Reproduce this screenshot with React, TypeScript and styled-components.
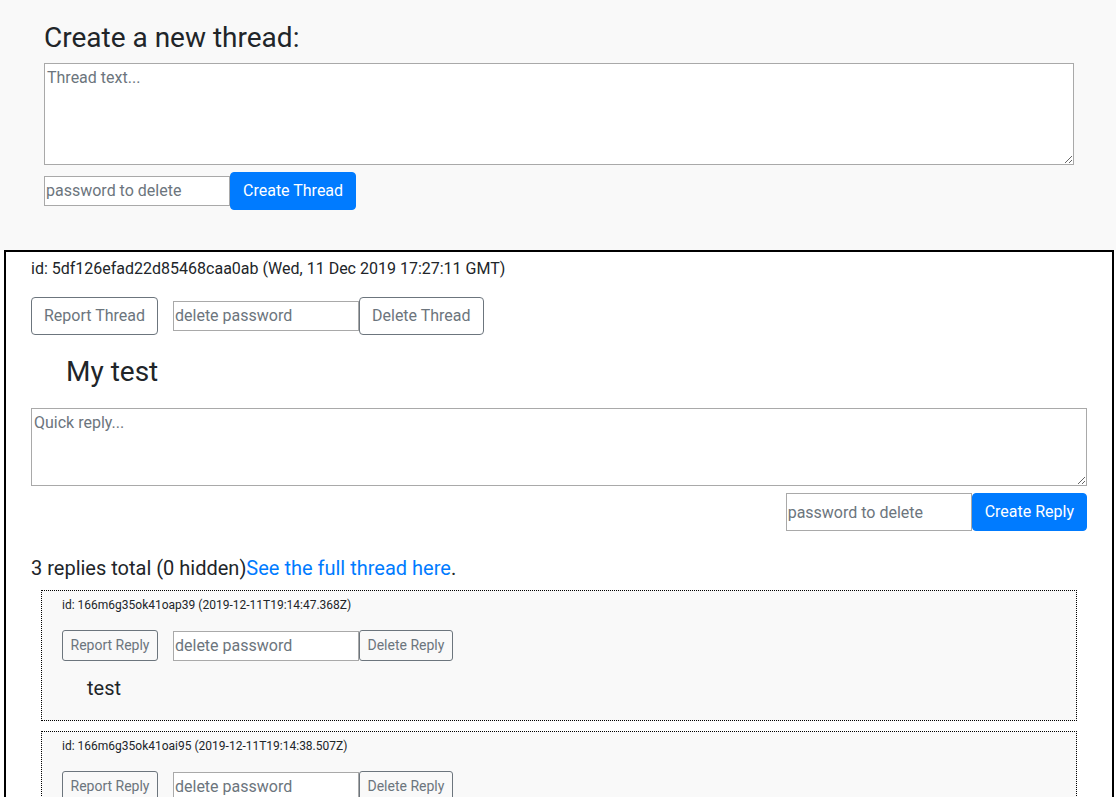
import React from "react";
import styled, { createGlobalStyle } from "styled-components";

const Global = createGlobalStyle`
  html, body { margin: 0; padding: 0; background: #ffffff; }
  body { font-family: Roboto, "Liberation Sans", Arial, sans-serif; color: #212529; font-size: 16px; line-height: 1.5; }
  * { box-sizing: border-box; }
`;

const Header = styled.section`
  background: #f9f9f9;
  padding: 21px 42px 40px 44px;
`;

const Title = styled.h3`
  margin: 0 0 8px;
  font-size: 28px;
  font-weight: 400;
  line-height: 1.2;
`;

const TextArea = styled.textarea<{ $h: number }>`
  display: block;
  width: 100%;
  height: ${(p) => p.$h}px;
  margin: 0;
  padding: 2px 2px;
  border: 1px solid #a9a9a9;
  font-family: Roboto, "Liberation Sans", Arial, sans-serif;
  font-size: 16px;
  line-height: 1.5;
  color: #212529;
  background: #fff;
  resize: vertical;
  &::placeholder { color: #6c757d; opacity: 1; }
`;

const FormRow = styled.div<{ $end?: boolean }>`
  display: flex;
  align-items: center;
  justify-content: ${(p) => (p.$end ? "flex-end" : "flex-start")};
  margin-top: 7px;
`;

const Input = styled.input<{ $h?: number }>`
  width: 186px;
  height: ${(p) => p.$h ?? 30}px;
  margin: 0;
  padding: 1px 1px;
  border: 1px solid #a9a9a9;
  background: #fff;
  font-family: Roboto, "Liberation Sans", Arial, sans-serif;
  font-size: 16px;
  color: #212529;
  &::placeholder { color: #6c757d; opacity: 1; }
`;

const Button = styled.button<{ $variant: "primary" | "outline"; $small?: boolean }>`
  font-family: Roboto, "Liberation Sans", Arial, sans-serif;
  font-size: ${(p) => (p.$small ? 14 : 16)}px;
  line-height: 1.5;
  padding: ${(p) => (p.$small ? "4px 7.5px" : "6px 12px")};
  border-radius: ${(p) => (p.$small ? 3 : 4)}px;
  border: 1px solid ${(p) => (p.$variant === "primary" ? "#007bff" : "#6c757d")};
  background: ${(p) => (p.$variant === "primary" ? "#007bff" : "transparent")};
  color: ${(p) => (p.$variant === "primary" ? "#fff" : "#6c757d")};
  white-space: nowrap;
  cursor: pointer;
`;

const ThreadBox = styled.article`
  margin: 0 2px 0 4px;
  border: 2px solid #000;
  border-bottom: none;
  background: #fff;
  padding: 5px 25px 40px 25px;
`;

const Meta = styled.div<{ $small?: boolean }>`
  font-size: ${(p) => (p.$small ? 12 : 16)}px;
  line-height: 1.5;
  color: #212529;
`;

const Actions = styled.div<{ $top: number }>`
  display: flex;
  align-items: center;
  margin-top: ${(p) => p.$top}px;
`;

const Spacer = styled.span`
  width: 15px;
  flex: none;
`;

const ThreadTitle = styled.h3`
  margin: 20px 0 20px 35px;
  font-size: 28px;
  font-weight: 400;
  line-height: 1.2;
`;

const Summary = styled.p`
  margin: 22px 0 7px;
  font-size: 20px;
  line-height: 1.5;
  a { color: #007bff; text-decoration: none; }
`;

const ReplyBox = styled.div`
  margin: 0 10px 10px;
  border: 1px dotted #000;
  background: #f9f9f9;
  padding: 5px 20px 17px 20px;
`;

const ReplyText = styled.p`
  margin: 12px 0 0 25px;
  font-size: 20px;
  line-height: 1.5;
`;

type Reply = { id: string; date: string; text: string };

const replies: Reply[] = [
  { id: "166m6g35ok41oap39", date: "2019-12-11T19:14:47.368Z", text: "test" },
  { id: "166m6g35ok41oai95", date: "2019-12-11T19:14:38.507Z", text: "test" },
  { id: "166m6g35ok41oah21", date: "2019-12-11T19:14:30.112Z", text: "test" },
];

function ReplyCard({ r }: { r: Reply }) {
  return (
    <ReplyBox>
      <Meta $small>
        id: {r.id} ({r.date})
      </Meta>
      <Actions $top={16}>
        <Button $variant="outline" $small>Report Reply</Button>
        <Spacer />
        <Input placeholder="delete password" />
        <Button $variant="outline" $small>Delete Reply</Button>
      </Actions>
      <ReplyText>{r.text}</ReplyText>
    </ReplyBox>
  );
}

export default function App() {
  return (
    <>
      <Global />
      <Header>
        <Title>Create a new thread:</Title>
        <TextArea $h={102} placeholder="Thread text..." />
        <FormRow>
          <Input placeholder="password to delete" />
          <Button $variant="primary">Create Thread</Button>
        </FormRow>
      </Header>
      <ThreadBox>
        <Meta>id: 5df126efad22d85468caa0ab (Wed, 11 Dec 2019 17:27:11 GMT)</Meta>
        <Actions $top={16}>
          <Button $variant="outline">Report Thread</Button>
          <Spacer />
          <Input placeholder="delete password" />
          <Button $variant="outline">Delete Thread</Button>
        </Actions>
        <ThreadTitle>My test</ThreadTitle>
        <TextArea $h={78} placeholder="Quick reply..." />
        <FormRow $end>
          <Input $h={38} placeholder="password to delete" />
          <Button $variant="primary">Create Reply</Button>
        </FormRow>
        <Summary>
          3 replies total (0 hidden)<a href="#">See the full thread here</a>.
        </Summary>
        {replies.map((r) => (
          <ReplyCard key={r.id} r={r} />
        ))}
      </ThreadBox>
    </>
  );
}
